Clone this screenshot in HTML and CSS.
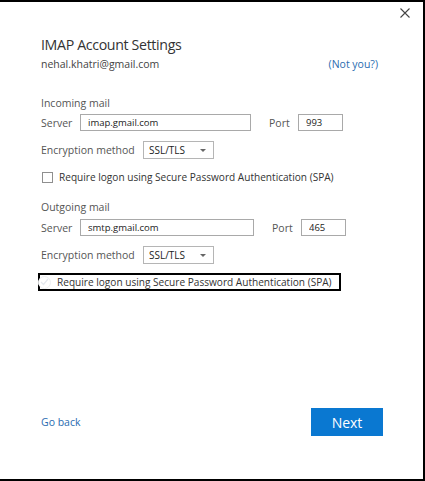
FILE: index.html
```html
<!DOCTYPE html>
<html lang="en">
<head>
    <meta charset="UTF-8">
    <meta name="viewport" content="width=device-width, initial-scale=1.0">
    <title>IMAP Account Settings</title>
    <link rel="stylesheet" href="styles.css">
</head>
<body>

<!-- Account settings dialog -->
<div class="dialog">
    <div class="close-row">
        <svg class="close" width="10" height="10" viewBox="0 0 10 10">
            <path d="M0.5 0.5 L9.5 9.5 M9.5 0.5 L0.5 9.5" stroke="#444" stroke-width="1.1" fill="none"/>
        </svg>
    </div>

    <div class="content">
        <h1 class="title">IMAP Account Settings</h1>
        <div class="account-row">
            <span class="email">nehal.khatri@gmail.com</span>
            <a class="link not-you" href="#">(Not you?)</a>
        </div>

        <!-- Incoming server -->
        <div class="section-label section-in">Incoming mail</div>
        <div class="server-row">
            <span class="label server-label">Server</span>
            <input class="field server-field" type="text" value="imap.gmail.com">
            <span class="label port-label">Port</span>
            <input class="field port-field" type="text" value="993">
        </div>
        <div class="enc-row">
            <span class="label enc-label">Encryption method</span>
            <div class="select">
                <span>SSL/TLS</span>
                <span class="arrow"></span>
            </div>
        </div>
        <label class="check-row">
            <span class="checkbox"></span>
            <span class="check-text">Require logon using Secure Password Authentication (SPA)</span>
        </label>

        <!-- Outgoing server -->
        <div class="section-label section-out">Outgoing mail</div>
        <div class="server-row server-out">
            <span class="label server-label">Server</span>
            <input class="field server-field wide" type="text" value="smtp.gmail.com">
            <span class="label port-label">Port</span>
            <input class="field port-field" type="text" value="465">
        </div>
        <div class="enc-row">
            <span class="label enc-label">Encryption method</span>
            <div class="select">
                <span>SSL/TLS</span>
                <span class="arrow"></span>
            </div>
        </div>
        <label class="check-row focused">
            <span class="checkbox round">
                <svg width="9" height="8" viewBox="0 0 9 8">
                    <path d="M1 4 L3.5 6.5 L8 1" stroke="#e4e8ee" stroke-width="1.2" fill="none"/>
                </svg>
            </span>
            <span class="check-text">Require logon using Secure Password Authentication (SPA)</span>
        </label>
    </div>

    <!-- Footer actions -->
    <div class="footer">
        <a class="link" href="#">Go back</a>
        <button class="next">Next</button>
    </div>
</div>

</body>
</html>
```

FILE: styles.css
```css
/* Global Styles */
body {
    margin: 0;
    padding: 0;
    background: #ffffff;
    font-family: 'Open Sans', 'Noto Sans', sans-serif;
    color: #444;
}

/* Dialog frame */
.dialog {
    width: 425px;
    height: 481px;
    box-sizing: border-box;
    border-top: 2px solid #000;
    border-right: 2px solid #000;
    border-bottom: 2px solid #000;
    display: flex;
    flex-direction: column;
}

.close-row {
    height: 33px;
    box-sizing: border-box;
    padding: 6px 13px 0 0;
    display: flex;
    justify-content: flex-end;
    align-items: flex-start;
}

.content {
    padding-left: 41px;
}

/* Header */
.title {
    margin: 0;
    font-size: 14.2px;
    line-height: 20px;
    font-weight: 400;
    color: #333;
    letter-spacing: -0.35px;
}

.account-row {
    margin-top: 1px;
    width: 337px;
    display: flex;
    justify-content: space-between;
    font-size: 10.5px;
    line-height: 16px;
}

.email {
    color: #444;
}

.link {
    color: #2a6cb0;
    text-decoration: none;
    font-size: 10.5px;
}

/* Sections */
.section-label {
    font-size: 10.5px;
    line-height: 16px;
    color: #555;
}

.section-in {
    margin-top: 23px;
}

.section-out {
    margin-top: 14px;
}

.label {
    font-size: 10.5px;
    color: #555;
}

.server-row {
    margin-top: 3px;
    display: flex;
    align-items: center;
    height: 17px;
}

.server-out {
    margin-top: 4px;
}

.server-label {
    width: 39px;
}

.field {
    box-sizing: border-box;
    height: 17px;
    border: 1px solid #a9a9a9;
    padding: 0 0 0 7px;
    margin: 0;
    font-family: 'Open Sans', 'Noto Sans', sans-serif;
    font-size: 9.5px;
    color: #222;
    outline: none;
}

.server-field {
    width: 171px;
}

.server-field.wide {
    width: 174px;
}

.port-label {
    margin-left: 18px;
    width: 29px;
}

.port-field {
    width: 45px;
}

/* Encryption dropdown */
.enc-row {
    margin-top: 10px;
    display: flex;
    align-items: center;
    height: 18px;
}

.enc-label {
    width: 102px;
}

.select {
    box-sizing: border-box;
    width: 71px;
    height: 18px;
    border: 1px solid #b5b5b5;
    padding: 0 7px 0 5px;
    display: flex;
    align-items: center;
    justify-content: space-between;
    font-size: 10px;
    color: #222;
}

.arrow {
    width: 0;
    height: 0;
    border-left: 3px solid transparent;
    border-right: 3px solid transparent;
    border-top: 3px solid #666;
}

/* Checkbox rows */
.check-row {
    margin-top: 10px;
    display: flex;
    align-items: center;
    height: 16px;
    font-size: 10.1px;
    color: #333;
    white-space: nowrap;
}

.checkbox {
    box-sizing: border-box;
    width: 11px;
    height: 11px;
    border: 1px solid #8f8f8f;
    margin: 0 6px 0 1px;
    background: #fff;
    flex-shrink: 0;
}

.check-row.focused {
    margin-top: 9px;
    margin-left: -3px;
    width: 303px;
    height: 18px;
    box-sizing: border-box;
    border: 2px solid #000;
}

.checkbox.round {
    width: 13px;
    height: 13px;
    border: 1px solid #eef0f2;
    border-radius: 50%;
    margin: 0 6px 0 -2px;
    display: flex;
    align-items: center;
    justify-content: center;
}

/* Footer */
.footer {
    margin-top: auto;
    margin-bottom: 43px;
    padding: 0 40px 0 41px;
    display: flex;
    justify-content: space-between;
    align-items: center;
}

.next {
    width: 72px;
    height: 28px;
    border: none;
    background-color: #0a78d1;
    color: #fff;
    font-family: 'Open Sans', 'Noto Sans', sans-serif;
    font-size: 14px;
    padding: 0;
}
```
